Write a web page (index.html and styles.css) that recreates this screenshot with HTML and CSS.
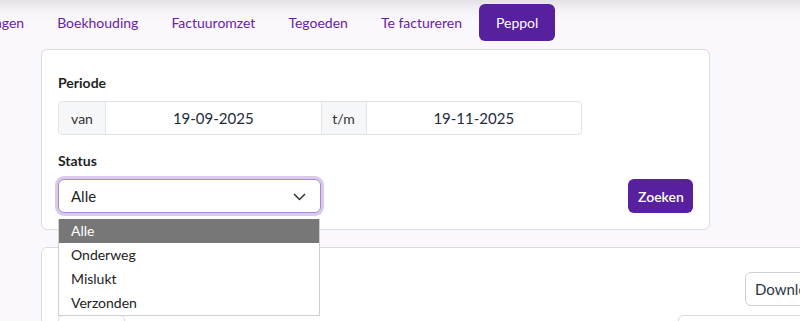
FILE: index.html
```html
<!DOCTYPE html>
<html>
<head>
  <meta charset="UTF-8">
  <title>Peppol</title>
  <link rel="stylesheet" href="styles.css">
</head>
<body>
  <nav class="tabs">
    <a class="tab">Betalingen</a>
    <a class="tab">Boekhouding</a>
    <a class="tab">Factuuromzet</a>
    <a class="tab">Tegoeden</a>
    <a class="tab">Te factureren</a>
    <a class="tab active">Peppol</a>
  </nav>

  <div class="card filter-card">
    <label class="field-label">Periode</label>
    <div class="input-group">
      <span class="addon">van</span>
      <span class="date-input">19-09-2025</span>
      <span class="addon">t/m</span>
      <span class="date-input">19-11-2025</span>
    </div>

    <label class="field-label status-label">Status</label>
    <div class="status-row">
      <div class="select-wrap">
        <div class="select">
          <span>Alle</span>
          <svg class="chevron" width="13" height="8" viewBox="0 0 13 8"><polyline points="1,1 6.5,6.5 12,1" fill="none" stroke="#333" stroke-width="1.5"/></svg>
        </div>
        <ul class="dropdown">
          <li class="selected">Alle</li>
          <li>Onderweg</li>
          <li>Mislukt</li>
          <li>Verzonden</li>
        </ul>
      </div>
      <button class="btn btn-primary">Zoeken</button>
    </div>
  </div>

  <div class="card result-card">
    <div class="result-top">
      <button class="btn btn-outline">Download</button>
    </div>
    <div class="result-bottom">
      <div class="stub stub-left"></div>
      <div class="stub stub-right"></div>
    </div>
  </div>
</body>
</html>
```

FILE: styles.css
```css
body{
  margin:0;
  font-family:Lato, "Open Sans", sans-serif;
  font-size:14px;
  color:#222;
  background:linear-gradient(#e3e1e5 0, #f4f2f6 10px, #faf8fc 22px) no-repeat, #faf8fc;
  overflow:hidden;
  height:321px;
}

.tabs{display:flex;align-items:center;gap:1px;height:49px;margin-left:-57px;box-sizing:border-box;}
.tab{
  display:flex;
  align-items:center;
  height:37px;
  padding:0 16px;
  color:#6a21a6;
  border-radius:6px;
  margin-top:-4px;
}
.tab.active{background:#56209e;color:white;padding:0 17px;}

.card{background:white;border:1px solid #dcdadf;border-radius:6px;margin-left:41px;box-sizing:border-box;}

.filter-card{width:669px;padding:24px 16px 16px 16px;}

.field-label{display:block;font-weight:700;line-height:18px;margin-bottom:9px;color:#1f1f1f;}
.status-label{margin-top:17px;margin-bottom:9px;}

.input-group{display:flex;width:524px;height:34px;border:1px solid #dfe2e6;border-radius:4px;box-sizing:border-box;overflow:hidden;}
.addon{display:flex;align-items:center;justify-content:center;background:#f6f7f9;color:#333;padding:0 12px;border-right:1px solid #dfe2e6;}
.addon:first-child{width:47px;box-sizing:border-box;}
.addon:nth-child(3){width:45px;box-sizing:border-box;}
.date-input{display:flex;align-items:center;justify-content:center;flex:1;color:#1d2b3c;font-size:15px;border-right:1px solid #dfe2e6;}
.date-input:last-child{border-right:0;}

.status-row{display:flex;justify-content:space-between;align-items:flex-end;}

.select-wrap{position:relative;width:263px;}
.select{
  display:flex;
  align-items:center;
  justify-content:space-between;
  height:34px;
  box-sizing:border-box;
  padding:0 14px 0 12px;
  border:1px solid #a88ad0;
  border-radius:6px;
  box-shadow:0 0 0 3px #d9caec;
  color:#222;
  font-size:15px;
  background:white;
}
.chevron{margin-top:1px;}

.dropdown{
  position:absolute;
  top:40px;
  left:0;
  width:262px;
  margin:0;
  padding:0;
  list-style:none;
  background:white;
  border:1px solid #cfcfd2;
  border-top:0;
  box-sizing:border-box;
  z-index:2;
}
.dropdown li{height:24px;line-height:24px;padding-left:12px;color:#222;}
.dropdown li.selected{background:#777;color:white;}

.btn{
  font-family:inherit;
  font-size:14px;
  height:34px;
  padding:0 10px;
  border-radius:6px;
  cursor:pointer;
}
.btn-primary{background:#56209e;color:white;border:none;font-weight:600;width:65px;}
.btn-outline{background:white;border:1px solid #cfcfd2;color:#2a3646;font-size:15px;padding:0 9px;}

.result-card{width:900px;height:120px;margin-top:17px;}
.result-top{display:flex;padding:24px 0 0 703px;}
.result-bottom{display:flex;justify-content:space-between;padding:9px 0 0 16px;}
.stub{height:30px;border:1px solid #dcdadf;border-radius:5px;background:white;}
.stub-left{width:65px;}
.stub-right{width:260px;}
```
